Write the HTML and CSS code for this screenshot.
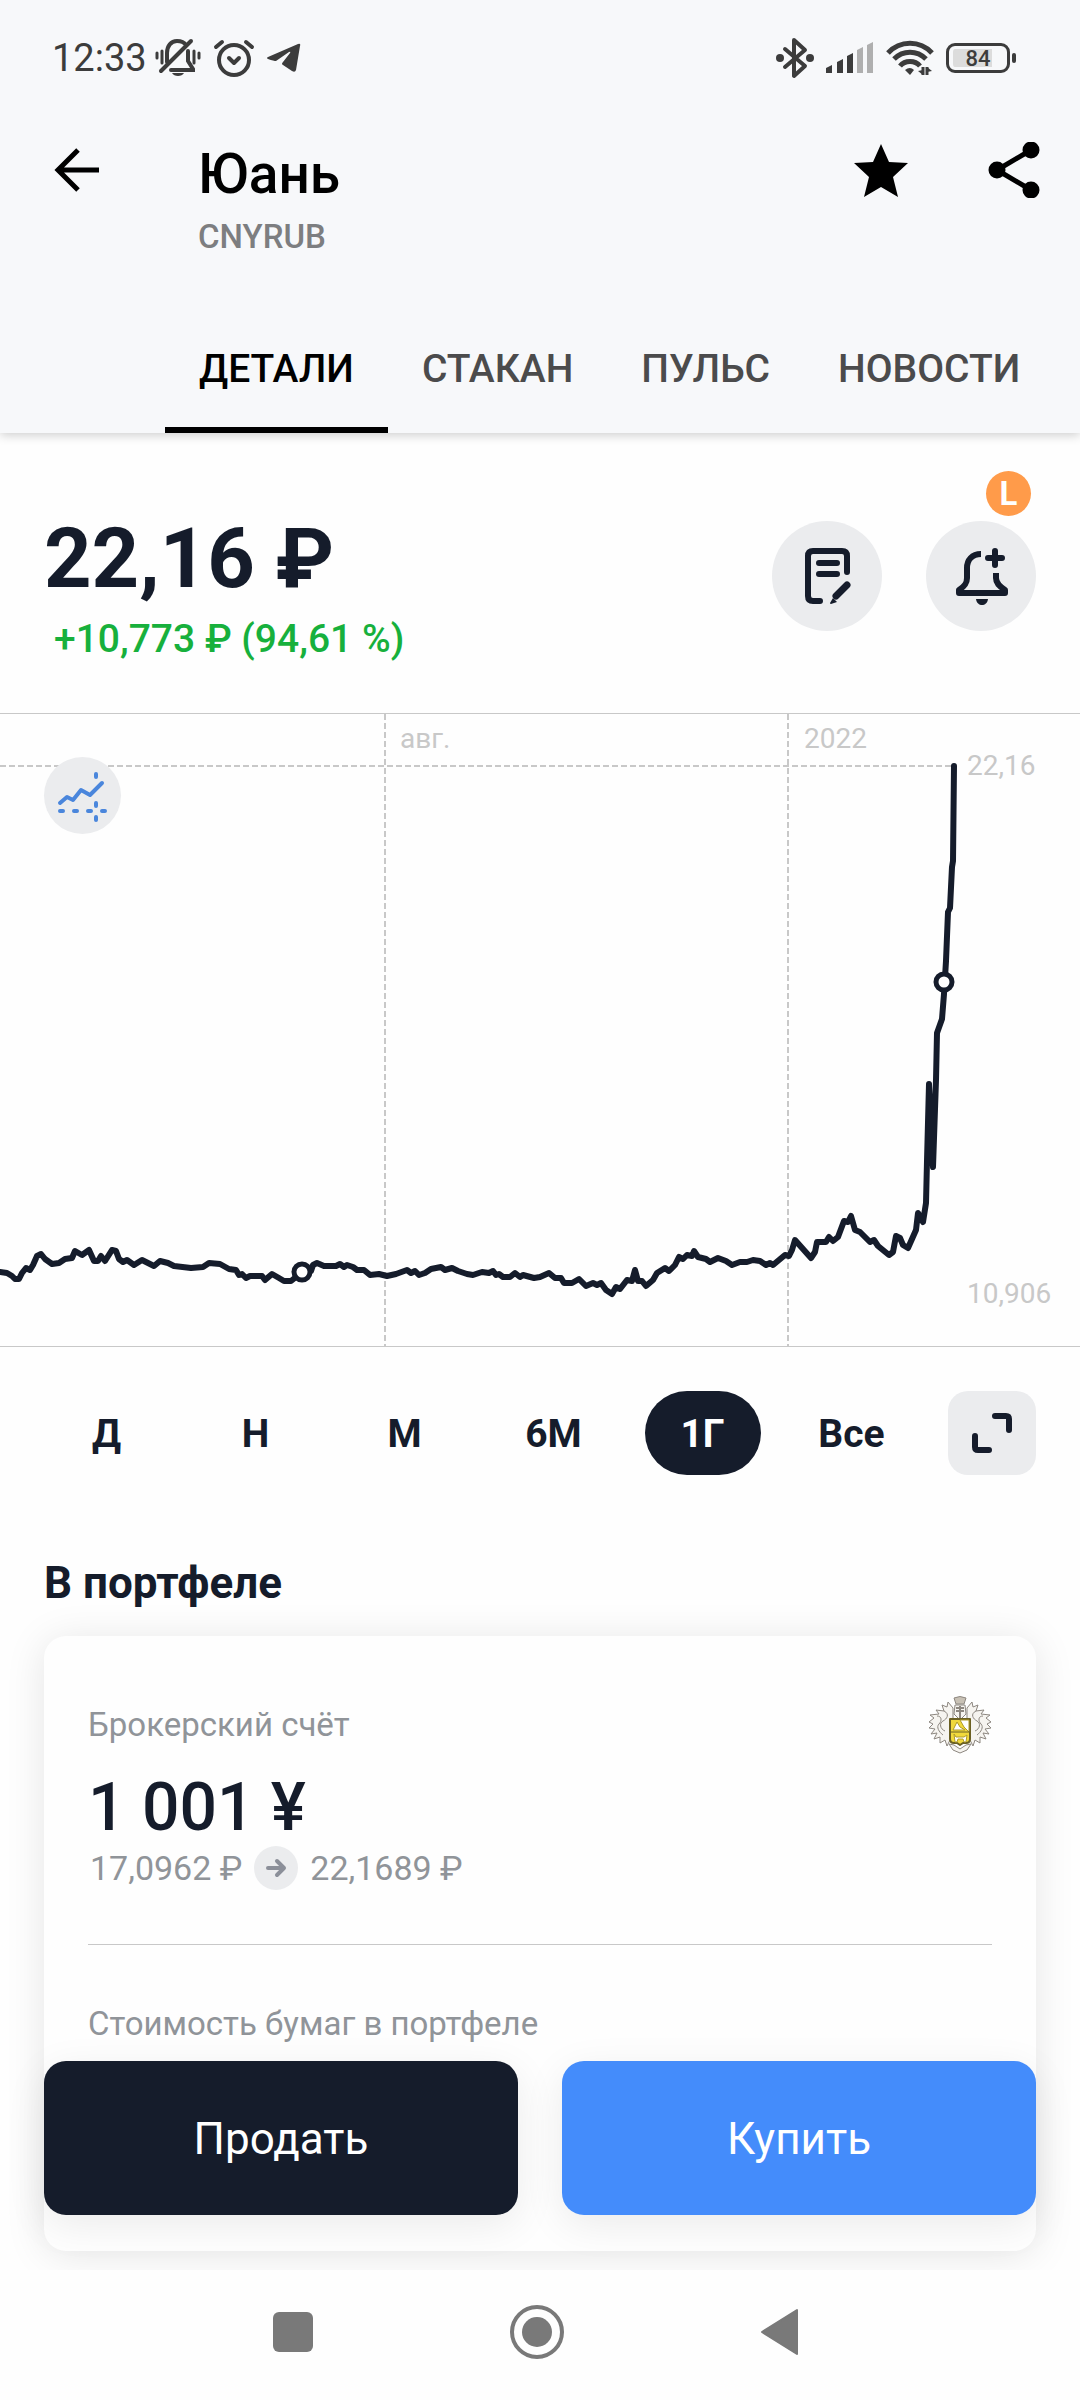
FILE: index.html
```html
<!DOCTYPE html>
<html lang="ru">
<head>
    <meta charset="UTF-8">
    <meta name="viewport" content="width=device-width, initial-scale=1.0">
    <title>Юань — CNYRUB</title>
    <link rel="stylesheet" href="styles.css">
</head>
<body>
    <header class="header">
        <!-- Статус-бар -->
        <div class="status-bar">
            <div class="status-left">
                <span class="status-time">12:33</span>
                <svg width="46" height="40" viewBox="0 0 46 40" fill="none" stroke="#3c3c3c" stroke-width="4" stroke-linecap="round">
                    <path d="M2 15v5M7 13v12" stroke-width="3"/>
                    <path d="M39 13v12M44 15v5" stroke-width="3"/>
                    <path d="M12 24V15c0-7 4-12 10-12 4 0 7 1 9 4"/>
                    <path d="M36 3L6 33"/>
                    <path d="M33 13v10l5 8v1H16"/>
                    <path d="M17 35h12c-2 4-10 4-12 0z" fill="#3c3c3c" stroke="none"/>
                </svg>
                <svg width="42" height="38" viewBox="0 0 42 38" fill="none" stroke="#3c3c3c" stroke-width="4" stroke-linecap="round" stroke-linejoin="round">
                    <circle cx="21" cy="21" r="15"/>
                    <path d="M16 19l5 5 5-5"/>
                    <path d="M3 8l6-5M39 8l-6-5"/>
                </svg>
                <svg width="34" height="30" viewBox="0 0 34 30" fill="#3c3c3c">
                    <path d="M1 14L31 1q3-1 2 2l-4 24q-1 3-4 1l-9-6q-2-1 0-3l7-9q1-2-1-1L9 18q-2 0-8-2-2-1 0-2z"/>
                </svg>
            </div>
            <div class="status-right">
                <svg width="38" height="42" viewBox="0 0 38 42" fill="none" stroke="#3c3c3c" stroke-width="4" stroke-linecap="round" stroke-linejoin="round">
                    <path d="M9 12l20 17-11 10V3l11 10L9 30"/>
                    <circle cx="4" cy="21" r="4" fill="#3c3c3c" stroke="none"/>
                    <circle cx="34" cy="21" r="4" fill="#3c3c3c" stroke="none"/>
                </svg>
                <svg width="48" height="32" viewBox="0 0 48 32" fill="#3c3c3c">
                    <path d="M0 31v-5l6-3v8zM11 31V20l6-3v14zM21 31V14l6-3v20z"/>
                    <path d="M31 31V8l6-3v26zM41 31V3l6-3v31z" fill="#afafaf"/>
                </svg>
                <svg width="48" height="36" viewBox="0 0 48 36" fill="none" stroke="#3c3c3c" stroke-width="5">
                    <path d="M2 13c12-13 32-13 44 0M8 19c9-9 23-9 32 0M14 26c5-6 15-6 20 0"/>
                    <path d="M19 30q5-4 9 0l-4 5z" fill="#3c3c3c" stroke="none"/>
                    <path d="M37 27v8M41 27v8" stroke-width="3"/>
                    <path d="M32 31l5-1v5zM46 31l-5 1v-5z" fill="#3c3c3c" stroke="none"/>
                </svg>
                <span class="battery">84</span>
            </div>
        </div>

        <!-- Шапка инструмента -->
        <div class="app-bar">
            <button class="icon-btn back" aria-label="Назад">
                <svg width="46" height="46" viewBox="0 0 46 46" fill="none" stroke="#000" stroke-width="5">
                    <path d="M24 3L4 23l20 20M4 23h41"/>
                </svg>
            </button>
            <div class="titles">
                <h1 class="title">Юань</h1>
                <p class="ticker">CNYRUB</p>
            </div>
            <button class="icon-btn" aria-label="В избранное">
                <svg width="54" height="54" viewBox="0 0 54 54">
                    <path d="M27 1l8 18 19 1-15 14 5 20-17-10-17 10 5-20L0 20l19-1z"/>
                </svg>
            </button>
            <button class="icon-btn share" aria-label="Поделиться">
                <svg width="52" height="56" viewBox="0 0 52 56" stroke="#000" stroke-width="5">
                    <path d="M43 8L9 28l34 20" fill="none"/>
                    <circle cx="43" cy="8" r="6"/>
                    <circle cx="9" cy="28" r="6"/>
                    <circle cx="43" cy="48" r="6"/>
                </svg>
            </button>
        </div>

        <nav class="tabs">
            <a href="#details" class="tab active">ДЕТАЛИ</a>
            <a href="#book" class="tab">СТАКАН</a>
            <a href="#pulse" class="tab">ПУЛЬС</a>
            <a href="#news" class="tab">НОВОСТИ</a>
        </nav>
    </header>

    <main class="content" id="details">
        <section class="quote">
            <div class="quote-values">
                <p class="price">22,16 ₽</p>
                <p class="change">+10,773 ₽ (94,61 %)</p>
            </div>
            <div class="quote-actions">
                <button class="round-btn" aria-label="Заявка">
                    <svg width="50" height="60" viewBox="0 0 50 60" fill="none" stroke="#151c2b" stroke-width="6" stroke-linecap="round" stroke-linejoin="round">
                        <path d="M18 55H11q-5 0-5-5V10q0-5 5-5h29q5 0 5 5v16"/>
                        <path d="M17 17h18M17 28h18"/>
                        <path d="M45 39L34 50" stroke-width="7" />
                        <path d="M31 52l4 4-6 2q-1 0-1-1z" fill="#151c2b" stroke="none"/>
                    </svg>
                </button>
                <button class="round-btn" aria-label="Уведомление о цене">
                    <svg width="54" height="60" viewBox="0 0 54 60" fill="none" stroke="#151c2b" stroke-width="6" stroke-linejoin="round">
                        <path d="M27 8C18 8 13 14 13 22v10c0 5-2 8-8 12v3h46v-3c-6-4-9-7-9-12v-5"/>
                        <path d="M41 5v14M34 12h14" stroke-linecap="round"/>
                        <path d="M22 53h12c-1 8-11 8-12 0z" fill="#151c2b" stroke="none"/>
                    </svg>
                    <span class="badge">L</span>
                </button>
            </div>
        </section>

        <!-- График за год -->
        <section class="chart">
            <svg class="chart-svg" viewBox="0 0 1080 632" role="img" aria-label="График курса">
                <g class="grid">
                    <path d="M385 0V632M788 0V632M0 52H953"/>
                </g>
                <g class="chart-labels">
                    <text x="400" y="34">авг.</text>
                    <text x="804" y="34">2022</text>
                    <text x="967" y="61">22,16</text>
                    <text x="967" y="589">10,906</text>
                </g>
                <polyline class="line" points="0,558 7,559 12,562 15,565 19,565 22,559 26,554 30,556 33,551 37,542 41,540 45,545 52,550 59,549 65,545 72,544 75,537 82,541 89,536 94,547 98,547 101,542 105,547 112,536 116,537 119,545 123,548 127,546 134,551 142,546 148,549 154,552 160,547 168,549 174,552 191,554 203,553 209,549 220,550 229,555 236,556 239,561 242,560 246,564 250,562 262,562 265,566 272,560 279,564 284,567 291,567 296,563 302,560 311,557 313,551 317,549 324,552 336,552 340,550 344,553 347,551 353,553 357,556 364,556 370,561 379,560 387,562 396,560 407,556 411,559 415,557 419,561 425,559 431,555 441,553 445,556 452,554 458,557 467,560 473,561 482,558 489,559 493,557 496,561 499,560 503,563 510,563 515,559 520,563 523,561 534,564 540,563
                    549,559 555,564 561,564 564,569 572,569 579,565 586,572 593,569 597,571 601,569 606,576 612,580 616,573 620,575 627,566 632,567 635,556 638,567 642,567 646,572 653,566 657,559 665,554 669,557 675,551 679,543 683,545 687,541 692,542 694,537 698,543 706,545 710,548 718,544 726,547 732,551 740,548 747,548 753,546 760,547 766,551 770,549 773,551 785,541 789,542 792,536 795,526 803,535 811,544 815,538 817,528 826,528 829,523 833,527 838,523 844,507 848,508 851,502 855,516 860,518 870,528 874,526 878,532 889,541 893,538 896,522 900,524 903,531 908,534 916,516 918,499 923,508 926,489 927,447 929,370 933,453 936,366 937,319 942,305 944,280 946,247 948,198 950,194 952,153 953,147 954,52"/>
                <circle class="dot" cx="302" cy="558" r="8"/>
                <circle class="dot" cx="944" cy="268" r="8"/>
            </svg>
            <button class="chart-type" aria-label="Тип графика">
                <svg width="52" height="52" viewBox="0 0 52 52" fill="none" stroke="#4a86dc" stroke-width="4" stroke-linecap="round" stroke-linejoin="round">
                    <path d="M3 33l7-6 6 3 8-10 9 5L45 13"/>
                    <path d="M3 41h3M17 41h3M31 41h3M45 41h3"/>
                    <path d="M39 4v3M39 33v3M39 47v3"/>
                </svg>
            </button>
        </section>

        <div class="periods">
            <div class="period-list">
                <button class="period">Д</button>
                <button class="period">Н</button>
                <button class="period">М</button>
                <button class="period">6М</button>
                <button class="period active">1Г</button>
                <button class="period">Все</button>
            </div>
            <button class="expand" aria-label="На весь экран">
                <svg width="40" height="40" viewBox="0 0 40 40" fill="none" stroke="#151c2b" stroke-width="6" stroke-linecap="round" stroke-linejoin="round">
                    <path d="M23 3h11q3 0 3 3v11M3 23v11q0 3 3 3h11"/>
                </svg>
            </button>
        </div>

        <h2 class="section-title">В портфеле</h2>

        <section class="card">
            <div class="card-head">
                <p class="label">Брокерский счёт</p>
                <svg width="64" height="58" viewBox="0 0 64 58" fill="#f6f4f0" stroke="#8d8780" stroke-width="1" stroke-linejoin="round">
                    <path d="M25 12l-5-6-1 5-5-2 2 6-8-1 3 4-9 1 4 3-5 4 4 2-4 4 6 1-4 5 6-1-3 6 6-2 0 6 5-3 2 6 3-6 3-4V20z"/>
                    <path d="M39 12l5-6 1 5 5-2-2 6 8-1-3 4 9 1-4 3 5 4-4 2 4 4-6 1 4 5-6-1 3 6-6-2 0 6-5-3-2 6-3-6-3-4V20z"/>
                    <path d="M16 15c6 3 3 8-1 10s-3 8 2 10M48 15c-6 3-3 8 1 10s3 8-2 10M9 20c5 0 5 5 2 8s0 8 4 11M55 20c-5 0-5 5-2 8s0 8-4 11" fill="none"/>
                    <path d="M21 48l4 6 7 3 7-3 4-6-5 1-6 4-6-4z"/>
                    <path d="M27 9h10l1 9-6 6-6-6z"/>
                    <path d="M26 2q6-3 12 0l-2 6h-8z" fill="#c8c1b5"/>
                    <path d="M28 12h8M28 15h8M32 10v12" fill="none" stroke-width="2"/>
                    <path d="M22 23h20v20q0 4-4 4h-3l-3 2-3-2h-3q-4 0-4-4z" fill="#f1d93c" stroke="#6b6024" stroke-width="2"/>
                    <path d="M32 24h9v12l-5-5zM25 34l4-8 3 5 5 3z" fill="#fff" stroke="#b09b28"/>
                    <path d="M22 36h20" stroke="#6b6024"/>
                    <path d="M26 38l2 3h8l3-2-1 7h-2l-1-3h-5l-1 3h-2z" fill="#fff" stroke="#b09b28"/>
                </svg>
            </div>
            <p class="amount">1 001 ¥</p>
            <p class="rates">
                <span>17,0962 ₽</span>
                <span class="arrow">
                    <svg width="22" height="20" viewBox="0 0 22 20" fill="none" stroke="#8b8f99" stroke-width="4" stroke-linecap="round" stroke-linejoin="round">
                        <path d="M3 10h16M12 3l7 7-7 7"/>
                    </svg>
                </span>
                <span>22,1689 ₽</span>
            </p>
            <hr class="divider">
            <p class="label">Стоимость бумаг в портфеле</p>
        </section>

        <div class="actions">
            <button class="action sell">Продать</button>
            <button class="action buy">Купить</button>
        </div>
    </main>

    <!-- Системная навигация -->
    <nav class="system-nav">
        <button class="icon-btn" aria-label="Недавние">
            <svg width="56" height="56" viewBox="0 0 56 56" fill="#797979"><rect x="8" y="8" width="40" height="40" rx="6"/></svg>
        </button>
        <button class="icon-btn" aria-label="Домой">
            <svg width="56" height="56" viewBox="0 0 56 56" fill="#797979">
                <circle cx="28" cy="28" r="25" fill="none" stroke="#797979" stroke-width="4"/>
                <circle cx="28" cy="28" r="15"/>
            </svg>
        </button>
        <button class="icon-btn" aria-label="Назад">
            <svg width="56" height="56" viewBox="0 0 56 56" fill="#797979" stroke="#797979" stroke-width="2" stroke-linejoin="round"><path d="M9 28L44 6v44z"/></svg>
        </button>
    </nav>
</body>
</html>
```

FILE: styles.css
```css
* {
    box-sizing: border-box;
}

body {
    margin: 0;
    min-height: 100vh;
    display: flex;
    flex-direction: column;
    background: #fefefe;
    color: #151c2b;
    font-family: Roboto, "Liberation Sans", sans-serif;
}

h1, h2, p {
    margin: 0;
}

svg {
    display: block;
}

button {
    padding: 0;
    border: none;
    background: none;
    color: inherit;
    font-family: inherit;
    cursor: pointer;
}

/* Шапка */
.header {
    position: relative;
    z-index: 1;
    background: #f7f8fa;
    box-shadow: 0 2px 10px rgba(0, 0, 0, 0.2);
}

.status-bar {
    display: flex;
    justify-content: space-between;
    align-items: center;
    height: 116px;
    padding: 0 70px 0 52px;
    color: #3c3c3c;
}

.status-left,
.status-right {
    display: flex;
    align-items: center;
}

.status-left {
    gap: 12px;
}

.status-right {
    gap: 12px;
}

.status-time {
    margin-right: -4px;
    font-size: 38px;
    line-height: 44px;
}

.battery {
    position: relative;
    width: 64px;
    height: 30px;
    border: 3px solid #3c3c3c;
    border-radius: 9px;
    background: linear-gradient(90deg, #dcdcdc 78%, transparent 78%) content-box;
    padding: 3px 4px;
    font-size: 22px;
    line-height: 20px;
    font-weight: 500;
    text-align: center;
}

.battery::after {
    content: "";
    position: absolute;
    right: -9px;
    top: 7px;
    width: 4px;
    height: 10px;
    border-radius: 2px;
    background: #3c3c3c;
}

.app-bar {
    display: flex;
    align-items: flex-start;
    padding: 26px 40px 0 54px;
}

.icon-btn {
    display: flex;
    align-items: center;
    justify-content: center;
    height: 56px;
}

.titles {
    flex: 1;
    padding-left: 98px;
}

.title {
    font-size: 55px;
    line-height: 64px;
    font-weight: 500;
    color: #000;
}

.ticker {
    margin-top: 11px;
    font-size: 33px;
    line-height: 40px;
    font-weight: 500;
    color: #7d7e80;
}

.share {
    margin-left: 80px;
}

.tabs {
    display: flex;
    margin-top: 48px;
    padding-left: 165px;
}

.tab {
    padding: 0 34px;
    font-size: 39px;
    line-height: 128px;
    font-weight: 500;
    color: #4b4b4c;
    text-decoration: none;
}

.tab.active {
    color: #000;
    box-shadow: inset 0 -6px 0 #000;
}

/* Цена */
.content {
    position: relative;
    flex: 1;
    display: flex;
    flex-direction: column;
    overflow: hidden;
    padding-bottom: 19px;
}

.quote {
    display: flex;
    justify-content: space-between;
    padding: 78px 44px 50px;
}

.price {
    font-size: 83px;
    line-height: 96px;
    font-weight: 700;
}

.change {
    margin-top: 8px;
    padding-left: 10px;
    font-size: 39px;
    line-height: 48px;
    font-weight: 500;
    color: #17b03c;
}

.quote-actions {
    display: flex;
    gap: 44px;
    margin-top: 10px;
}

.round-btn {
    position: relative;
    display: flex;
    align-items: center;
    justify-content: center;
    width: 110px;
    height: 110px;
    border-radius: 50%;
    background: #ebecee;
}

.badge {
    position: absolute;
    top: -50px;
    right: 5px;
    width: 45px;
    height: 45px;
    border-radius: 50%;
    background: #ff9b4a;
    color: #fff;
    font-size: 33px;
    line-height: 45px;
    font-weight: 700;
}

/* График */
.chart {
    position: relative;
    border-top: 1px solid #c8c8c8;
    border-bottom: 1px solid #c8c8c8;
}

.chart-svg {
    width: 100%;
    height: auto;
}

.grid {
    fill: none;
    stroke: #c8c8c8;
    stroke-width: 2;
    stroke-dasharray: 6 3;
}

.chart-labels {
    font-size: 28px;
    fill: #c8c8c8;
}

.line {
    fill: none;
    stroke: #151c2b;
    stroke-width: 6;
    stroke-linecap: round;
    stroke-linejoin: round;
}

.dot {
    fill: #fff;
    stroke: #151c2b;
    stroke-width: 5;
}

.chart-type {
    position: absolute;
    top: 43px;
    left: 44px;
    display: flex;
    align-items: center;
    justify-content: center;
    width: 77px;
    height: 77px;
    border-radius: 50%;
    background: #ebecee;
}

/* Периоды */
.periods {
    display: flex;
    align-items: center;
    gap: 22px;
    padding: 44px 44px 0 32px;
}

.period-list {
    flex: 1;
    display: grid;
    grid-template-columns: repeat(6, 1fr);
    justify-items: center;
}

.period {
    width: 116px;
    height: 84px;
    padding-top: 2px;
    border-radius: 42px;
    font-size: 39px;
    font-weight: 700;
}

.period.active {
    background: #151c2b;
    color: #fff;
}

.expand {
    display: flex;
    align-items: center;
    justify-content: center;
    width: 88px;
    height: 84px;
    border-radius: 20px;
    background: #ebecee;
}

/* Портфель */
.section-title {
    margin: 82px 44px 27px;
    font-size: 44px;
    line-height: 52px;
    font-weight: 700;
}

.card {
    flex: 1;
    min-height: 600px;
    margin: 0 44px;
    padding: 60px 44px;
    border-radius: 22px;
    background: #fefefe;
    box-shadow: 0 4px 40px rgba(0, 0, 0, 0.1);
}

.card-head {
    display: flex;
    justify-content: space-between;
    align-items: center;
}

.label {
    font-size: 33px;
    line-height: 40px;
    color: #909499;
}

.amount {
    margin-top: 16px;
    font-size: 66px;
    line-height: 76px;
    font-weight: 500;
}

.rates {
    display: flex;
    align-items: center;
    gap: 12px;
    padding-left: 2px;
    font-size: 34px;
    line-height: 44px;
    color: #909499;
}

.arrow {
    display: flex;
    align-items: center;
    justify-content: center;
    width: 44px;
    height: 44px;
    border-radius: 50%;
    background: #ebecee;
}

.divider {
    margin: 54px 0 59px;
    border: none;
    border-top: 1px solid #c8c8c8;
}

/* Кнопки сделки поверх карточки */
.actions {
    position: absolute;
    left: 44px;
    right: 44px;
    bottom: 55px;
    display: flex;
    gap: 44px;
}

.action {
    flex: 1;
    height: 154px;
    padding-top: 2px;
    border-radius: 22px;
    color: #fff;
    font-size: 44px;
    box-shadow: 0 10px 40px rgba(0, 0, 0, 0.08);
}

.sell {
    background: #151c2b;
}

.buy {
    background: #448cfb;
}

/* Системная навигация */
.system-nav {
    display: flex;
    justify-content: center;
    align-items: center;
    gap: 188px;
    height: 130px;
    padding: 0 6px 6px 0;
}
```
